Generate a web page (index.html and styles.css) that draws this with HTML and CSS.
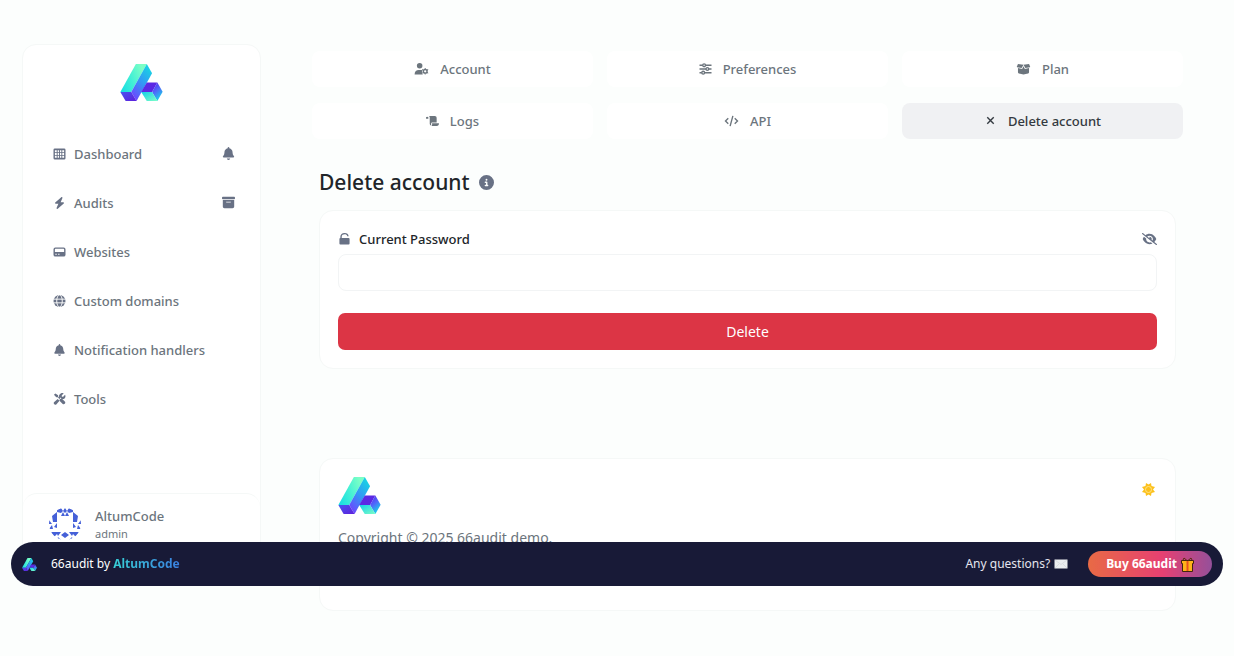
FILE: index.html
```html
<!DOCTYPE html>
<html lang="en">
<head>
  <meta charset="UTF-8" />
  <meta name="viewport" content="width=device-width, initial-scale=1.0" />
  <title>Delete account - 66audit</title>
  <link rel="stylesheet" href="styles.css">
</head>
<body>
  <!-- shared shapes -->
  <svg class="sprite" aria-hidden="true">
    <defs>
      <linearGradient id="beam" x1="0" y1="1" x2="1" y2="0.6">
        <stop offset="0" stop-color="#14dbe4" />
        <stop offset="0.5" stop-color="#40efd6" />
        <stop offset="1" stop-color="#7bffc6" />
      </linearGradient>
      <linearGradient id="side" x1="0.8" y1="0" x2="0.2" y2="1">
        <stop offset="0" stop-color="#16d9e2" />
        <stop offset="0.5" stop-color="#3397f5" />
        <stop offset="1" stop-color="#7042ff" />
      </linearGradient>
      <linearGradient id="base" x1="0" y1="0" x2="1" y2="1">
        <stop offset="0" stop-color="#4a53f0" />
        <stop offset="1" stop-color="#5d20dc" />
      </linearGradient>
      <linearGradient id="edge" x1="0" y1="0" x2="0.5" y2="1">
        <stop offset="0" stop-color="#5427e6" />
        <stop offset="0.5" stop-color="#5264fb" />
        <stop offset="1" stop-color="#16d5e8" />
      </linearGradient>
      <linearGradient id="foot" x1="0" y1="0" x2="1" y2="1">
        <stop offset="0" stop-color="#13cfe8" />
        <stop offset="1" stop-color="#7dffc7" />
      </linearGradient>
    </defs>
    <symbol id="logo" viewBox="0 0 128 112">
      <path fill="url(#beam)" d="M47 0h33L33 85H0z" />
      <path fill="url(#side)" d="M80 0l16 28-47 84-16-27z" />
      <path fill="url(#base)" d="M0 85h33l16 27H16z" />
      <path fill="#5b28e4" d="M80 56h32L96 85H63z" />
      <path fill="url(#edge)" d="M112 56l16 28-16 28-16-27z" />
      <path fill="url(#foot)" d="M63 85h33l16 27H80z" />
    </symbol>
    <symbol id="bell" viewBox="0 0 448 512">
      <path d="M224 0c-17.700 0-32 14.300-32 32V51.200C119 66 64 130.600 64 208v18.800c0 47-17.300 92.400-48.500 127.600l-7.400 8.300c-8.400 9.400-10.400 22.900-5.300 34.400S19.400 416 32 416H416c12.600 0 24-7.400 29.200-18.900s3.100-25-5.300-34.400l-7.400-8.300C401.300 319.200 384 273.900 384 226.800V208c0-77.400-55-142-128-156.800V32c0-17.700-14.300-32-32-32zm45.300 493.300c12-12 18.700-28.300 18.700-45.300H160c0 17 6.700 33.300 18.700 45.300s28.300 18.700 45.300 18.700s33.300-6.700 45.300-18.700z" />
    </symbol>
  </svg>

  <div class="app">
    <aside class="sidebar">
      <a class="sidebar-logo" href="#" aria-label="66audit"><svg class="logo"><use href="#logo" /></svg></a>

      <ul class="menu">
        <li>
          <a href="#">
            <svg class="icon" viewBox="0 0 26 26"><path fill-rule="evenodd" d="M3 1h20a3 3 0 0 1 3 3v18a3 3 0 0 1-3 3H3a3 3 0 0 1-3-3V4a3 3 0 0 1 3-3zM3 5v4h4V5zm6 0v4h3V5zm5 0v4h3V5zm5 0v4h4V5zM3 11v4h4v-4zm6 0v4h3v-4zm5 0v4h3v-4zm5 0v4h4v-4zM3 17v4h4v-4zm6 0v4h3v-4zm5 0v4h3v-4zm5 0v4h4v-4z" /></svg>
            Dashboard
          </a>
          <button type="button" aria-label="Notifications"><svg class="icon"><use href="#bell" /></svg></button>
        </li>
        <li>
          <a href="#">
            <svg class="icon" viewBox="0 0 448 512"><path d="M349.400 44.600c5.900-13.700 1.500-29.700-10.600-38.500s-28.600-8-39.900 1.800l-256 224c-10 8.800-13.600 22.900-8.900 35.300S50.700 288 64 288H175.500L98.600 467.400c-5.900 13.700-1.500 29.700 10.600 38.500s28.600 8 39.900-1.800l256-224c10-8.800 13.600-22.900 8.900-35.300s-16.600-20.700-30-20.700H272.500L349.400 44.600z" /></svg>
            Audits
          </a>
          <button type="button" aria-label="Archived audits"><svg class="icon" viewBox="0 0 512 512"><path d="M32 32H480c17.700 0 32 14.300 32 32V96c0 17.700-14.300 32-32 32H32C14.300 128 0 113.700 0 96V64C0 46.300 14.300 32 32 32zm0 128H480V416c0 35.300-28.700 64-64 64H96c-35.300 0-64-28.700-64-64V160zm128 80c0 8.800 7.200 16 16 16H336c8.800 0 16-7.200 16-16s-7.200-16-16-16H176c-8.800 0-16 7.200-16 16z" /></svg></button>
        </li>
        <li>
          <a href="#">
            <svg class="icon" viewBox="0 0 26 26"><path fill-rule="evenodd" d="M4 3h18a4 4 0 0 1 4 4v12a4 4 0 0 1-4 4H4a4 4 0 0 1-4-4V7a4 4 0 0 1 4-4zm0 3a1 1 0 0 0-1 1v6h20V7a1 1 0 0 0-1-1zm0 11v2h3v-2zm6 0v2h3v-2z" /></svg>
            Websites
          </a>
        </li>
        <li>
          <a href="#">
            <svg class="icon" viewBox="0 0 26 26"><circle cx="13" cy="13" r="13" /><g class="cut"><ellipse cx="13" cy="13" rx="6" ry="13" /><path d="M0 9h26M0 17h26" /></g></svg>
            Custom domains
          </a>
        </li>
        <li>
          <a href="#"><svg class="icon"><use href="#bell" /></svg> Notification handlers</a>
        </li>
        <li>
          <a href="#">
            <svg class="icon" viewBox="0 0 26 26"><path d="M1 4l3-3 6 4v3l5 5 3-1 7 7c2 3-2 7-5 5l-7-7 1-3-5-5H6zM16 1c2-1 4-1 6 0l-4 4v3h3l4-4c3 6-2 10-7 9l-3-3-2 2-1-1c-1-4 0-8 4-10zM9 13l4 4-7 8c-3 2-7-2-5-5z" /></svg>
            Tools
          </a>
        </li>
      </ul>

      <a class="user" href="#">
        <svg class="avatar" viewBox="0 0 32 32">
          <clipPath id="round"><circle cx="16" cy="16" r="16" /></clipPath>
          <g clip-path="url(#round)">
            <path d="M8 0h4l2 3 2-3 2 3 2-3h4v4l-4 1-2-2-2 2-2-2-2 2-4-1zM12 8l2-4 2 4 2-4 2 4zM3 8l5-4v10H4zM29 8l-5-4v10h4zM0 12l3 4H0zM32 12l-3 4h3zM0 21l3-4 1 4zM32 21l-3-4-1 4zM5 19l3-4v5zM27 19l-3-4v5zM2 24h10l-3 4-1-2-3 3zM30 24H20l3 4 1-2 3 3zM12 27l4-3 4 3-4 3zM8 32l1-3 3 3zM24 32l-1-3-3 3z" />
          </g>
        </svg>
        <span><strong>AltumCode</strong><small>admin</small></span>
      </a>
    </aside>

    <main>
      <nav class="tabs">
        <a href="#">
          <svg class="icon wide" viewBox="0 0 30 26"><circle cx="11" cy="6" r="6" /><path d="M0 25c0-7 4-10 9-10h4c2 0 3 0 4 1-2 3-1 7 1 9z" /><circle class="ring" cx="23" cy="18" r="4" /><path d="M22 11h2v3h-2zM22 22h2v3h-2zM16 14l2-1 2 3-2 1zM26 20l2-1 2 3-2 1zM16 22l2-3 2 1-2 3zM26 16l2-3 2 1-2 3z" /></svg>
          Account
        </a>
        <a href="#">
          <svg class="icon line" viewBox="0 0 26 26"><path d="M0 5h7m6 0h13M0 13h14m6 0h6M0 21h5m6 0h15" /><circle cx="10" cy="5" r="3" /><circle cx="17" cy="13" r="3" /><circle cx="8" cy="21" r="3" /></svg>
          Preferences
        </a>
        <a href="#">
          <svg class="icon wide" viewBox="0 0 30 26"><path d="M3 2l12 2-4 7-10-2q-1-1 0-2zM27 2L15 4l4 7 10-2q1-1 0-2zM3 11l9 2 3-6 3 6 9-2v9q0 2-2 3l-10 2-10-2q-2-1-2-3z" /></svg>
          Plan
        </a>
        <a href="#">
          <svg class="icon" viewBox="0 0 28 26"><path d="M0 8V5a3 3 0 0 1 5 0v3zM6 2h13q4 0 4 4v10H13q-2 0-2 3v4q-3-1-3-4V5q0-2-2-3zM13 18h15q0 6-5 6H12q2-2 1-6z" /></svg>
          Logs
        </a>
        <a href="#">
          <svg class="icon wide line" viewBox="0 0 30 26"><path d="M8 7l-6 6 6 6M22 7l6 6-6 6M18 2l-6 22" /></svg>
          API
        </a>
        <a class="active" href="#" aria-current="page">
          <svg class="icon line" viewBox="0 0 26 26"><path d="M6 5l14 14M20 5L6 19" /></svg>
          Delete account
        </a>
      </nav>

      <section class="content">
        <h1>
          Delete account
          <svg viewBox="0 0 512 512"><path fill-rule="evenodd" d="M256 512A256 256 0 1 0 256 0a256 256 0 1 0 0 512zM216 336h24V272H216c-13.300 0-24-10.700-24-24s10.700-24 24-24h48c13.300 0 24 10.700 24 24v88h8c13.300 0 24 10.700 24 24s-10.700 24-24 24H216c-13.300 0-24-10.700-24-24s10.700-24 24-24zm40-208a32 32 0 1 1 0 64 32 32 0 1 1 0-64z" /></svg>
        </h1>

        <form class="card">
          <div class="field-head">
            <label for="current-password">
              <svg class="icon" viewBox="0 0 26 26"><path d="M7 11V8c0-6 11-7 12-1h3C21-3 4-2 4 8v3q-2 0-2 2v10q0 2 2 2h18q2 0 2-2V13q0-2-2-2z" /></svg>
              Current Password
            </label>
            <button type="button" aria-label="Show password">
              <svg viewBox="0 0 640 512"><path d="M38.800 5.100C28.400-3.100 13.300-1.200 5.100 9.200S-1.200 34.700 9.200 42.900l592 464c10.400 8.200 25.500 6.300 33.700-4.100s6.300-25.500-4.100-33.700L525.600 386.700c39.600-40.600 66.400-86.100 79.900-118.400c3.300-7.900 3.300-16.700 0-24.600c-14.900-35.700-46.200-87.700-93-131.100C465.500 68.800 400.800 32 320 32c-68.200 0-125 26.300-169.300 60.800L38.800 5.100zM223.100 149.500C248.600 126.200 282.700 112 320 112c79.500 0 144 64.500 144 144c0 24.900-6.300 48.300-17.400 68.700L408 294.500c8.400-19.300 10.600-41.400 4.800-63.300c-11.100-41.500-47.800-69.400-88.600-71.100c-5.800-.2-9.200 6.100-7.400 11.700c2.100 6.400 3.300 13.200 3.300 20.300c0 10.200-2.400 19.800-6.600 28.300l-90.300-70.800zM373 389.900c-16.400 6.500-34.300 10.100-53 10.100c-79.500 0-144-64.500-144-144c0-6.900 .5-13.600 1.400-20.200L83.100 161.500C60.300 191.200 44 220.800 34.500 243.700c-3.300 7.900-3.300 16.700 0 24.600c14.900 35.700 46.200 87.700 93 131.100C174.500 443.200 239.200 480 320 480c47.800 0 89.900-12.900 126.200-32.500L373 389.900z" /></svg>
            </button>
          </div>
          <input type="password" id="current-password" />
          <button class="delete" type="submit">Delete</button>
        </form>

        <footer class="card">
          <div class="footer-head">
            <svg class="logo"><use href="#logo" /></svg>
            <button class="theme" type="button" aria-label="Switch theme">
              <svg viewBox="0 0 26 26"><path d="M13 3l5-3 1 6 7 2-4 5 4 5-7 2-1 6-5-3-5 3-1-6-7-2 4-5-4-5 7-2 1-6z" /><circle cx="13" cy="13" r="6" /></svg>
            </button>
          </div>
          <p>Copyright © 2025 66audit demo.</p>
        </footer>
      </section>
    </main>
  </div>

  <div class="promo">
    <svg class="promo-logo"><use href="#logo" /></svg>
    <p>66audit by <a href="#">AltumCode</a></p>
    <a class="questions" href="#">
      Any questions?
      <svg viewBox="0 0 28 20"><path fill="#eceef0" d="M1 1h26v18H1z" /><path fill="none" stroke="#c9cdd2" stroke-width="1" d="M2 2l12 9L26 2M2 18l8-8M26 18l-8-8" /></svg>
    </a>
    <a class="buy" href="#">
      Buy 66audit
      <svg viewBox="0 0 26 30"><path fill="#ffb31a" stroke="#40250f" stroke-width="2" d="M1 7h24v6h-2v16H3V13H1z" /><path fill="#e8501e" d="M11 8h4v20h-4z" /><path fill="none" stroke="#5c2a10" stroke-width="2" d="M12 7L6 2 4 6M14 7l6-5 2 4" /></svg>
    </a>
  </div>
</body>
</html>
```

FILE: styles.css
```css
* {
  box-sizing: border-box;
}

body {
  margin: 0;
  background: #fcfefd;
  color: #212529;
  font-family: "Segoe UI", "Noto Sans", "Open Sans", sans-serif;
  font-size: 13px;
  line-height: 20px;
}

a {
  color: inherit;
  text-decoration: none;
}

button {
  border: 0;
  padding: 0;
  background: none;
  color: inherit;
  font: inherit;
  cursor: pointer;
}

svg {
  display: block;
  flex: none;
  fill: currentColor;
}

.sprite {
  position: absolute;
  width: 0;
  height: 0;
}

.icon {
  width: 13px;
  height: 12px;
}

.icon.wide {
  width: 15px;
}

.line {
  fill: none;
  stroke: currentColor;
  stroke-width: 3;
}

.cut {
  fill: none;
  stroke: #fff;
  stroke-width: 2;
}

.ring {
  fill: none;
  stroke: currentColor;
  stroke-width: 3;
}

.logo {
  width: 43px;
  height: 37px;
}

.app {
  display: flex;
  align-items: flex-start;
  padding-left: 22px;
}

/* sidebar */

.sidebar {
  position: sticky;
  top: 44px;
  display: flex;
  flex-direction: column;
  width: 239px;
  height: calc(100vh - 132px);
  margin-top: 44px;
  border: 1px solid #f5f8f7;
  border-radius: 14px;
  background: #fff;
  color: #6c757d;
  font-weight: 500;
}

.sidebar-logo {
  display: flex;
  justify-content: center;
  margin: 19px 0 28px;
}

.menu {
  flex: 1;
  margin: 0;
  padding: 0 25px 0 30px;
  list-style: none;
}

.menu li {
  display: flex;
  align-items: center;
  justify-content: space-between;
  height: 49px;
}

.menu a {
  display: flex;
  align-items: center;
  gap: 8px;
}

.menu .icon {
  color: #687185;
}

.menu button .icon {
  height: 13px;
}

.user {
  display: flex;
  align-items: center;
  gap: 14px;
  height: 74px;
  padding: 0 26px 14px;
  border-top: 1px solid #f5f8f7;
  border-radius: 14px;
}

.user strong,
.user small {
  display: block;
  font-weight: 500;
}

.user small {
  font-size: 11px;
  font-weight: 400;
  line-height: 16px;
}

.avatar {
  width: 32px;
  height: 32px;
  fill: #4560d8;
}

/* main column */

main {
  flex: 1;
  padding: 51px 51px 45px;
}

.tabs {
  display: grid;
  grid-template-columns: repeat(3, 1fr);
  gap: 16px 14px;
}

.tabs a {
  display: flex;
  align-items: center;
  justify-content: center;
  gap: 11px;
  height: 36px;
  border-radius: 8px;
  background: #fff;
  color: #6c757d;
  font-weight: 500;
}

.tabs .active {
  background: #f0f1f3;
  color: #343a40;
}

.content {
  padding: 0 7px;
}

h1 {
  display: flex;
  align-items: center;
  gap: 9px;
  margin: 28px 0 12px;
  font-size: 21px;
  font-weight: 500;
  line-height: 31px;
}

h1 svg {
  width: 15px;
  height: 15px;
  color: #687185;
}

.card {
  padding: 18px;
  border: 1px solid #f5f8f7;
  border-radius: 14px;
  background: #fff;
}

.field-head,
.footer-head {
  display: flex;
  align-items: center;
  justify-content: space-between;
}

.field-head {
  margin-bottom: 5px;
  color: #687185;
}

.field-head button svg {
  width: 15px;
  height: 12px;
}

label {
  display: flex;
  align-items: center;
  gap: 8px;
  color: #212529;
  font-weight: 500;
}

label .icon {
  color: #687185;
}

input {
  display: block;
  width: 100%;
  height: 37px;
  padding: 0 12px;
  border: 1px solid #f2f4f5;
  border-radius: 8px;
  background: #fff;
  font: inherit;
}

.delete {
  display: block;
  width: 100%;
  height: 37px;
  margin-top: 22px;
  border-radius: 7px;
  background: #dc3545;
  color: #fff;
  font-size: 14px;
}

footer {
  min-height: 153px;
  margin-top: 89px;
  color: #6c757d;
}

footer p {
  margin: 14px 0 0;
  font-size: 14px;
}

.theme {
  padding: 0 2px 12px 0;
  color: #fcc11b;
}

.theme svg {
  width: 13px;
  height: 13px;
}

.theme circle {
  fill: none;
  stroke: #ffe28a;
  stroke-width: 2;
}

/* bottom bar, stays over the page */

.promo {
  position: fixed;
  right: 11px;
  bottom: 70px;
  left: 11px;
  display: flex;
  align-items: center;
  height: 44px;
  padding: 0 11px;
  border-radius: 22px;
  background: #181a37;
  color: #fff;
  font-size: 12px;
}

.promo-logo {
  width: 15px;
  height: 13px;
  margin-right: 14px;
}

.promo p {
  flex: 1;
  margin: 0;
}

.promo p a {
  background: linear-gradient(90deg, #38d0d5, #3a7fe0);
  background-clip: text;
  color: transparent;
  font-weight: 700;
}

.questions,
.buy {
  display: flex;
  align-items: center;
  gap: 4px;
}

.questions {
  margin-right: 20px;
  color: #e4e5ee;
}

.questions svg {
  width: 14px;
  height: 10px;
}

.buy {
  height: 26px;
  padding: 0 18px;
  border-radius: 13px;
  background: linear-gradient(90deg, #e86a45, #e64072 60%, #95509a);
  font-weight: 700;
}

.buy svg {
  width: 13px;
  height: 15px;
}
```
